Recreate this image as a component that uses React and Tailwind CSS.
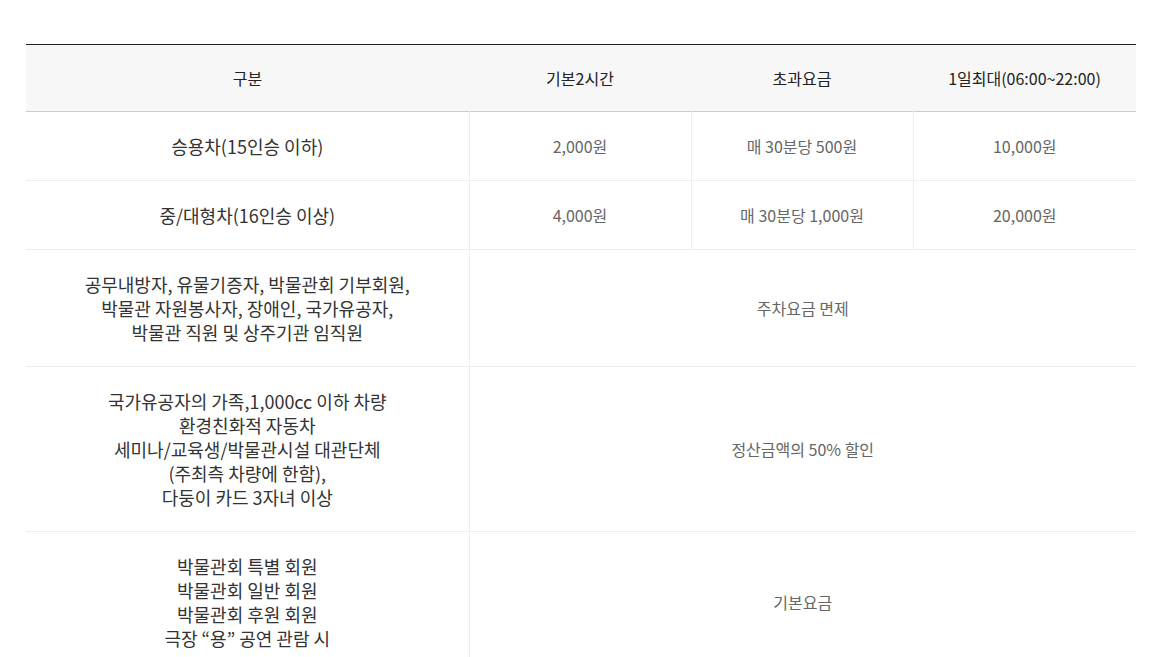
const rows = [
  { label: ["승용차(15인승 이하)"], cells: ["2,000원", "매 30분당 500원", "10,000원"] },
  { label: ["중/대형차(16인승 이상)"], cells: ["4,000원", "매 30분당 1,000원", "20,000원"] },
  {
    label: ["공무내방자, 유물기증자, 박물관회 기부회원,", "박물관 자원봉사자, 장애인, 국가유공자,", "박물관 직원 및 상주기관 임직원"],
    span: "주차요금 면제",
  },
  {
    label: ["국가유공자의 가족,1,000cc 이하 차량", "환경친화적 자동차", "세미나/교육생/박물관시설 대관단체", "(주최측 차량에 한함),", "다둥이 카드 3자녀 이상"],
    span: "정산금액의 50% 할인",
  },
  {
    label: ["박물관회 특별 회원", "박물관회 일반 회원", "박물관회 후원 회원", "극장 “용” 공연 관람 시"],
    span: "기본요금",
  },
];

const App = () => {
  return (
    <div className="min-h-screen bg-white pt-[44px] pl-[26px] font-['Noto_Sans_CJK_KR','Noto_Sans',sans-serif]">
      <table className="w-[1110px] border-collapse table-fixed border-t border-t-[#222]">
        <colgroup>
          <col className="w-[443px]" />
          <col className="w-[222px]" />
          <col className="w-[222px]" />
          <col className="w-[223px]" />
        </colgroup>
        <thead>
          <tr className="bg-[#f7f7f7] border-b border-b-[#ccc]">
            {["구분", "기본2시간", "초과요금", "1일최대(06:00~22:00)"].map((h) => (
              <th key={h} className="h-[67px] text-[16px] leading-[22px] font-normal text-[#222] text-center">
                {h}
              </th>
            ))}
          </tr>
        </thead>
        <tbody>
          {rows.map((r, i) => (
            <tr key={i} className="border-b border-b-[#eee]">
              <td className="py-[22px] text-[18px] leading-[24px] text-[#333] text-center border-r border-r-[#eee]">
                {r.label.map((l) => (
                  <div key={l}>{l}</div>
                ))}
              </td>
              {r.span ? (
                <td colSpan={3} className="text-[16px] leading-[22px] text-[#666] text-center">
                  {r.span}
                </td>
              ) : (
                r.cells.map((c, j) => (
                  <td
                    key={c}
                    className={`text-[16px] leading-[22px] text-[#666] text-center ${j < 2 ? "border-r border-r-[#eee]" : ""}`}
                  >
                    {c}
                  </td>
                ))
              )}
            </tr>
          ))}
        </tbody>
      </table>
    </div>
  );
};

export default App;
